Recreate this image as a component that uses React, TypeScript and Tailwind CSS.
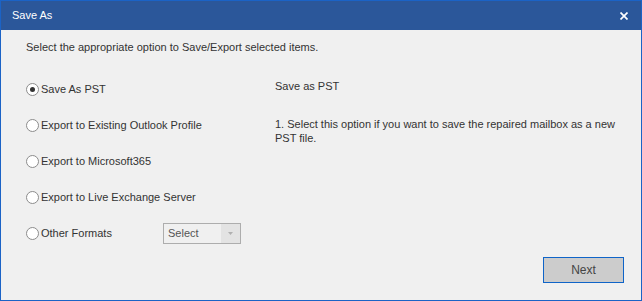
import React from "react";

const font = { fontFamily: '"Liberation Sans", Arial, sans-serif' };

function Radio({ checked, label }: { checked?: boolean; label: string }) {
  return (
    <div className="flex items-center h-[36px]">
      <span className="w-[13px] h-[13px] rounded-full border border-[#8c8c8c] bg-white flex items-center justify-center">
        {checked && <span className="w-[5px] h-[5px] rounded-full bg-[#333333]" />}
      </span>
      <span className="ml-[2px] text-[11px] text-[#333333]">{label}</span>
    </div>
  );
}

export default function App() {
  return (
    <div className="w-[642px] h-[301px] bg-[#f0f0f0] border border-[#1b63c6] flex flex-col" style={font}>
      <div className="h-[29px] bg-[#2b579a] flex items-center justify-between pl-[11px] pr-[13px] shrink-0">
        <span className="text-white text-[11px]">Save As</span>
        <svg width="8" height="8" viewBox="0 0 8 8">
          <path d="M0.5 0.5 L7.5 7.5 M7.5 0.5 L0.5 7.5" stroke="white" strokeWidth="1.7" />
        </svg>
      </div>
      <div className="flex-1 flex flex-col pl-[25px] pr-[17px] pt-[9px] pb-[16px]">
        <div className="text-[11px] text-[#333333] leading-[16px]">
          Select the appropriate option to Save/Export selected items.
        </div>
        <div className="flex mt-[16px]">
          <div className="w-[249px] flex flex-col">
            <Radio checked label="Save As PST" />
            <Radio label="Export to Existing Outlook Profile" />
            <Radio label="Export to Microsoft365" />
            <Radio label="Export to Live Exchange Server" />
            <div className="flex items-center h-[36px]">
              <span className="w-[13px] h-[13px] rounded-full border border-[#8c8c8c] bg-white" />
              <span className="ml-[2px] text-[11px] text-[#333333] w-[122px]">Other Formats</span>
              <div className="w-[78px] h-[21px] border border-[#adadad] bg-[#f0f0f0] flex items-stretch mt-[1px]">
                <span className="flex-1 text-[11px] text-[#555555] pl-[4px] flex items-center">Select</span>
                <span className="w-[19px] bg-[#e3e3e3] flex items-center justify-center">
                  <svg width="5" height="3" viewBox="0 0 5 3"><path d="M0 0 L5 0 L2.5 3 Z" fill="#b0b0b0" /></svg>
                </span>
              </div>
            </div>
          </div>
          <div className="flex-1 text-[11px] text-[#333333] pt-[7px]">
            <div className="leading-[16px]">Save as PST</div>
            <div className="mt-[23px] leading-[14px] w-[340px]">
              1. Select this option if you want to save the repaired mailbox as a new PST file.
            </div>
          </div>
        </div>
        <div className="flex-1" />
        <div className="flex justify-end">
          <button className="w-[81px] h-[26px] border border-[#0f64c8] bg-[#cccccc] text-[12px] text-[#444444] -mt-[1px] mb-[1px]">
            Next
          </button>
        </div>
      </div>
    </div>
  );
}
